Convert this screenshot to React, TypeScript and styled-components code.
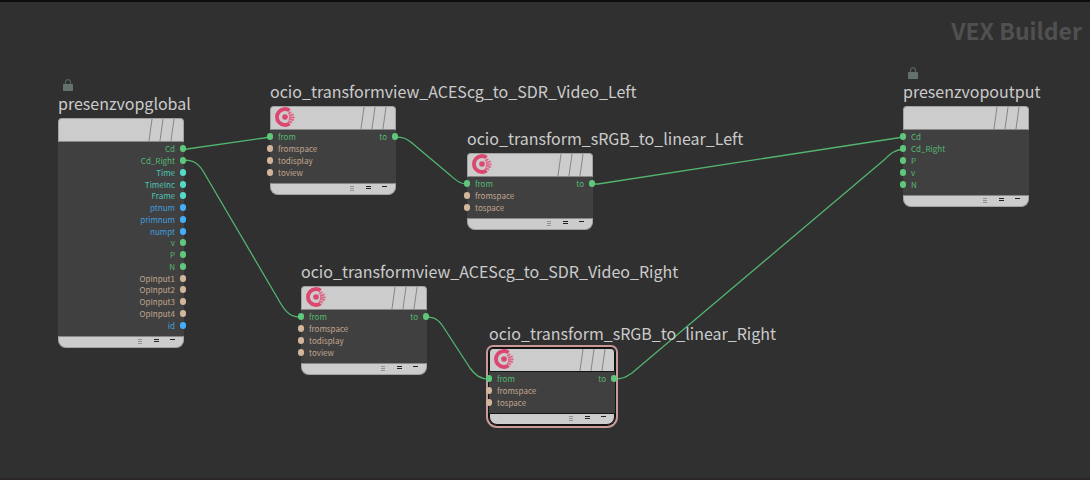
import React from "react";
import styled, { createGlobalStyle, css } from "styled-components";

const GlobalStyle = createGlobalStyle`
  *, *::before, *::after { box-sizing: border-box; }
  body { margin: 0; background: #303030; }
  button { appearance: none; padding: 0; border: 0; background: none; font: inherit; color: inherit; }
`;

const COLORS = {
  green: ["#55b872", "#5fc77b"],
  teal: ["#4cc5b3", "#55d8c6"],
  blue: ["#429edf", "#45aefc"],
  tan: ["#c2a68e", "#d2b69c"],
} as const;

type Tone = keyof typeof COLORS;
type PortData = { name: string; tone: Tone };
type NodeData = {
  name: string;
  x: number;
  y: number;
  inputs?: PortData[];
  outputs?: PortData[];
  locked?: boolean;
  logo?: boolean;
  selected?: boolean;
};

const port = (tone: Tone, ...names: string[]): PortData[] =>
  names.map((name) => ({ name, tone }));

const NODES: NodeData[] = [
  {
    name: "presenzvopglobal",
    x: 58,
    y: 118,
    locked: true,
    outputs: [
      ...port("green", "Cd", "Cd_Right"),
      ...port("teal", "Time", "TimeInc", "Frame"),
      ...port("blue", "ptnum", "primnum", "numpt"),
      ...port("green", "v", "P", "N"),
      ...port("tan", "OpInput1", "OpInput2", "OpInput3", "OpInput4"),
      ...port("blue", "id"),
    ],
  },
  {
    name: "ocio_transformview_ACEScg_to_SDR_Video_Left",
    x: 270,
    y: 106,
    logo: true,
    inputs: [...port("green", "from"), ...port("tan", "fromspace", "todisplay", "toview")],
    outputs: port("green", "to"),
  },
  {
    name: "ocio_transform_sRGB_to_linear_Left",
    x: 467,
    y: 153,
    logo: true,
    inputs: [...port("green", "from"), ...port("tan", "fromspace", "tospace")],
    outputs: port("green", "to"),
  },
  {
    name: "ocio_transformview_ACEScg_to_SDR_Video_Right",
    x: 301,
    y: 286,
    logo: true,
    inputs: [...port("green", "from"), ...port("tan", "fromspace", "todisplay", "toview")],
    outputs: port("green", "to"),
  },
  {
    name: "ocio_transform_sRGB_to_linear_Right",
    x: 489,
    y: 348,
    logo: true,
    selected: true,
    inputs: [...port("green", "from"), ...port("tan", "fromspace", "tospace")],
    outputs: port("green", "to"),
  },
  {
    name: "presenzvopoutput",
    x: 903,
    y: 106,
    locked: true,
    inputs: port("green", "Cd", "Cd_Right", "P", "v", "N"),
  },
];

const WIRES = [
  "M183 149 H187 L264 138 L270 137",
  "M183 160 C193 160 198 163 203 171 L281 304 C287 314 292 317 301 317",
  "M395 137 C404 137 407 139 412 143 L450 175 C457 181 460 184 467 184",
  "M592 184 L598 184 L897 138 L903 137",
  "M426 317 C435 317 439 320 444 328 L470 368 C475 375 480 379 489 379",
  "M614 379 C623 379 626 377 632 373 L884 160 C891 153 895 150 903 149",
];

const Network = styled.main`
  position: relative;
  min-height: 100vh;
  overflow: hidden;
  border-top: 2px solid #0c0c0c;
  border-bottom: 2px solid #2b2729;
  background: #303030;
  color: #cbcbcb;
  font-family: "Noto Sans CJK SC", "Noto Sans", sans-serif;
`;

const ContextName = styled.h1`
  margin: 0;
  padding: 10px 8px 0;
  color: #505050;
  font-size: 23px;
  font-weight: 700;
  line-height: 36px;
  text-align: right;
`;

const Canvas = styled.div`
  position: absolute;
  inset: -2px 0 0;
`;

const Wires = styled.svg`
  position: absolute;
  width: 100%;
  height: 100%;
  fill: none;
  stroke: #52b56f;
  stroke-width: 1.3;
`;

const NodeGroup = styled.article`
  position: absolute;
  width: 126px;
`;

const Caption = styled.header`
  display: flex;
  flex-direction: column;
  justify-content: flex-end;
  height: 47px;
  margin-bottom: 3px;
`;

const LockIcon = styled.svg`
  width: 10px;
  height: 12px;
  margin-left: 5px;
`;

const Title = styled.h2`
  margin: 0;
  font-size: 16px;
  font-weight: 400;
  line-height: 24px;
  white-space: nowrap;
`;

const Box = styled.div<{ $selected?: boolean }>`
  border-radius: 4px 4px 8px 8px;
  background: #404040;
  ${(p) =>
    p.$selected &&
    css`
      box-shadow: 0 0 0 1px #141414, 0 0 0 3px #c99a99;
    `}
`;

const bar = css<{ $selected?: boolean }>`
  display: flex;
  justify-content: flex-end;
  border: 1px solid ${(p) => (p.$selected ? "#141414" : "#a2a2a2")};
  background: #cccccc;
`;

const TopBar = styled.div<{ $selected?: boolean }>`
  ${bar}
  height: 24px;
  overflow: hidden;
  border-bottom-color: ${(p) => (p.$selected ? "#141414" : "#888888")};
  border-radius: 4px 4px 0 0;
`;

const Logo = styled.svg`
  width: 20px;
  height: 20px;
  margin: 0 auto 0 4px;
`;

const Flag = styled.button`
  width: 11px;
  border-left: 1px solid #858585;
  transform: skewX(-8deg);
`;

const BottomBar = styled.div<{ $selected?: boolean }>`
  ${bar}
  height: 12px;
  padding-right: 3px;
  border-top-color: ${(p) => (p.$selected ? "#141414" : "#888888")};
  border-radius: 0 0 8px 8px;
`;

const Tool = styled.button`
  display: flex;
  justify-content: center;
  width: 16px;
`;

const ToolIcon = styled.svg`
  width: 6px;
  height: 10px;
`;

const Ports = styled.div<{ $rows: number }>`
  display: flex;
  justify-content: space-between;
  height: ${(p) => Math.floor(p.$rows * 11.8) + 6}px;
  padding: 1px 0 5px;
`;

const PortList = styled.ul<{ $rows: number }>`
  display: grid;
  grid-template-rows: repeat(${(p) => p.$rows}, 1fr);
  margin: 0 -2px 0 -3px;
  padding: 0;
  list-style: none;
`;

const Port = styled.li<{ $tone: Tone; $out?: boolean }>`
  display: flex;
  flex-direction: ${(p) => (p.$out ? "row-reverse" : "row")};
  align-items: center;
  gap: 5px;
  min-height: 0;
  color: ${(p) => COLORS[p.$tone][0]};
  font-size: 8px;
  line-height: 11px;
`;

const Dot = styled.button<{ $tone: Tone }>`
  width: 6px;
  height: 7px;
  border-radius: 3px;
  background: ${(p) => COLORS[p.$tone][1]};
`;

function Lock() {
  return (
    <LockIcon viewBox="0 0 10 12" aria-label="Locked">
      <path d="M2.5 6V3.2a2.5 2.5 0 0 1 5 0V6" fill="none" stroke="#526060" strokeWidth="1.3" />
      <rect y="5" width="10" height="7" rx="0.7" fill="#65716f" />
    </LockIcon>
  );
}

function OcioLogo() {
  return (
    <Logo viewBox="0 0 20 20" aria-hidden="true">
      <path d="M14.6 3.5A8 8 0 1 0 14.6 16.5" fill="none" stroke="#dc4770" strokeWidth="3.8" />
      <circle cx="10" cy="10" r="2.8" fill="#dc4770" />
      <g stroke="#df6688" strokeWidth="1.8">
        <path d="M13 6.8l3.4-1.8M13.8 8.6l5-1.2M14 10.4h5.6M13.8 12.2l5 .8M13 14l4 1.6" />
      </g>
    </Logo>
  );
}

function PortColumn({ ports, rows, out }: { ports: PortData[]; rows: number; out?: boolean }) {
  return (
    <PortList $rows={rows}>
      {ports.map((p) => (
        <Port key={p.name} $tone={p.tone} $out={out}>
          <Dot type="button" $tone={p.tone} aria-label={`Connect ${p.name}`} />
          <span>{p.name}</span>
        </Port>
      ))}
    </PortList>
  );
}

function NetworkNode({ node }: { node: NodeData }) {
  const { inputs = [], outputs = [], selected } = node;
  const rows = Math.max(inputs.length, outputs.length);
  return (
    <NodeGroup style={{ left: node.x, top: node.y - 50 }}>
      <Caption>
        {node.locked && <Lock />}
        <Title>{node.name}</Title>
      </Caption>
      <Box $selected={selected}>
        <TopBar $selected={selected}>
          {node.logo && <OcioLogo />}
          <Flag type="button" aria-label="Bypass" />
          <Flag type="button" aria-label="Debug" />
          <Flag type="button" aria-label="Material" />
        </TopBar>
        <Ports $rows={rows}>
          <PortColumn ports={inputs} rows={rows} />
          <PortColumn ports={outputs} rows={rows} out />
        </Ports>
        <BottomBar $selected={selected}>
          <Tool type="button" aria-label="Show all ports">
            <ToolIcon viewBox="0 0 6 10" stroke="#929292">
              <path d="M1 2.5h4M1 4.5h4M1 6.5h4" />
            </ToolIcon>
          </Tool>
          <Tool type="button" aria-label="Show connected ports">
            <ToolIcon viewBox="0 0 6 10" stroke="#222222">
              <path d="M1 2.5h5M1 4.5h5" />
            </ToolIcon>
          </Tool>
          <Tool type="button" aria-label="Collapse">
            <ToolIcon viewBox="0 0 6 10" stroke="#222222">
              <path d="M1 2.5h5" />
            </ToolIcon>
          </Tool>
        </BottomBar>
      </Box>
    </NodeGroup>
  );
}

export default function App() {
  return (
    <Network>
      <GlobalStyle />
      <ContextName>VEX Builder</ContextName>
      <Canvas>
        <Wires aria-hidden="true">
          {WIRES.map((d) => (
            <path key={d} d={d} />
          ))}
        </Wires>
        {NODES.map((node) => (
          <NetworkNode key={node.name} node={node} />
        ))}
      </Canvas>
    </Network>
  );
}
